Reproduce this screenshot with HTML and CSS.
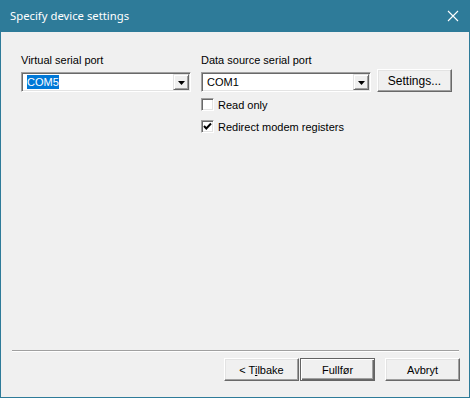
FILE: index.html
```html
<!DOCTYPE html>
<html lang="en">
<head>
    <meta charset="UTF-8">
    <meta name="viewport" content="width=device-width, initial-scale=1.0">
    <title>Specify device settings</title>
    <link rel="stylesheet" href="styles.css">
</head>
<body>
    <div class="window">
        <div class="titlebar">
            <span class="title">Specify device settings</span>
            <svg class="close" width="12" height="12" viewBox="0 0 12 12">
                <path d="M1 1 L11 11 M11 1 L1 11" stroke="#fff" stroke-width="1.1" fill="none"/>
            </svg>
        </div>
        <div class="dialog">
            <div class="fields">
                <div class="field left">
                    <label class="caption">Virtual serial port</label>
                    <div class="combo">
                        <span class="value"><span class="selected">COM5</span></span>
                        <span class="drop">
                            <svg width="7" height="4" viewBox="0 0 7 4"><path d="M0 0 H7 L3.5 4 Z" fill="#000"/></svg>
                        </span>
                    </div>
                </div>
                <div class="field right">
                    <label class="caption">Data source serial port</label>
                    <div class="port-row">
                        <div class="combo">
                            <span class="value">COM1</span>
                            <span class="drop">
                                <svg width="7" height="4" viewBox="0 0 7 4"><path d="M0 0 H7 L3.5 4 Z" fill="#000"/></svg>
                            </span>
                        </div>
                        <button class="btn settings">Settings...</button>
                    </div>
                    <label class="check"><span class="box"></span>Read only</label>
                    <label class="check">
                        <span class="box">
                            <svg width="9" height="9" viewBox="0 0 9 9"><path d="M1 4 L3.3 6.5 L8 1.5" stroke="#000" stroke-width="2" fill="none"/></svg>
                        </span>
                        Redirect modem registers
                    </label>
                </div>
            </div>
            <div class="footer">
                <div class="separator"></div>
                <div class="buttons">
                    <button class="btn">&lt; T<u>i</u>lbake</button>
                    <button class="btn default">Fullfør</button>
                    <button class="btn cancel">Avbryt</button>
                </div>
            </div>
        </div>
    </div>
</body>
</html>
```
FILE: styles.css
```css
html, body {
    margin: 0;
    padding: 0;
}
body {
    width: 470px;
    height: 398px;
    font-family: "Liberation Sans", Arial, sans-serif;
    font-size: 11px;
    color: #000;
    background-color: #f0f0f0;
}
.window {
    width: 470px;
    height: 398px;
    box-sizing: border-box;
    border: 1px solid #2e7b99;
    border-top: none;
    display: flex;
    flex-direction: column;
    background-color: #f0f0f0;
}
.titlebar {
    height: 31px;
    margin: 0 -1px;
    background-color: #2e7b99;
    display: flex;
    align-items: center;
    justify-content: space-between;
    padding: 0 10px 1px 10px;
    flex-shrink: 0;
}
.title {
    color: #fff;
    font-family: "Noto Sans", "Liberation Sans", sans-serif;
    font-size: 11.3px;
}
.close {
    margin-right: 1px;
}
.dialog {
    flex: 1;
    display: flex;
    flex-direction: column;
}
.fields {
    display: flex;
    gap: 10px;
    padding: 21px 0 0 20px;
}
.field {
    display: flex;
    flex-direction: column;
}
.caption {
    display: block;
    line-height: 14px;
    height: 14px;
    margin-bottom: 5px;
}
.combo {
    width: 170px;
    height: 20px;
    box-sizing: border-box;
    background-color: #fff;
    border: 1px solid;
    border-color: #a0a0a0 #fff #fff #a0a0a0;
    box-shadow: inset 1px 1px 0 #696969, inset -1px -1px 0 #e3e3e3;
    display: flex;
    align-items: center;
    padding: 1px;
}
.value {
    flex: 1;
    padding-left: 4px;
    line-height: 16px;
}
.selected {
    background-color: #0078d7;
    color: #fff;
    padding: 1px 0;
}
.left .value {
    padding-left: 4px;
}
.drop {
    width: 16px;
    height: 16px;
    box-sizing: border-box;
    background-color: #f0f0f0;
    border: 1px solid;
    border-color: #e3e3e3 #696969 #696969 #e3e3e3;
    box-shadow: inset 1px 1px 0 #fff, inset -1px -1px 0 #a0a0a0;
    display: flex;
    align-items: center;
    justify-content: center;
    padding-top: 1px;
}
.port-row {
    display: flex;
    align-items: flex-end;
    gap: 6px;
    margin-top: -3px;
}
.btn {
    width: 75px;
    height: 23px;
    box-sizing: border-box;
    font-family: "Liberation Sans", Arial, sans-serif;
    font-size: 11px;
    color: #000;
    background-color: #f0f0f0;
    border: 1px solid;
    border-color: #fff #696969 #696969 #fff;
    box-shadow: inset -1px -1px 0 #a0a0a0, inset 1px 1px 0 #e3e3e3;
    padding: 0;
    cursor: pointer;
}
.settings {
    font-size: 12px;
}
.check {
    display: flex;
    align-items: center;
    height: 13px;
    gap: 4px;
    margin-top: 6px;
}
.check + .check {
    margin-top: 9px;
}
.box {
    width: 13px;
    height: 13px;
    box-sizing: border-box;
    background-color: #fff;
    border: 1px solid;
    border-color: #a0a0a0 #fff #fff #a0a0a0;
    box-shadow: inset 1px 1px 0 #696969, inset -1px -1px 0 #e3e3e3;
    display: flex;
    align-items: center;
    justify-content: center;
    flex-shrink: 0;
}
.footer {
    margin-top: auto;
    padding-bottom: 16px;
}
.separator {
    margin: 0 10px 0 11px;
    border-top: 1px solid #a0a0a0;
    border-bottom: 1px solid #fff;
}
.buttons {
    display: flex;
    justify-content: flex-end;
    margin-top: 6px;
    padding-right: 9px;
}
.default {
    border-color: #646464;
    box-shadow: inset 1px 1px 0 #fff, inset -1px -1px 0 #696969, inset -2px -2px 0 #a0a0a0;
    margin-left: 1px;
}
.cancel {
    margin-left: 10px;
}
```
